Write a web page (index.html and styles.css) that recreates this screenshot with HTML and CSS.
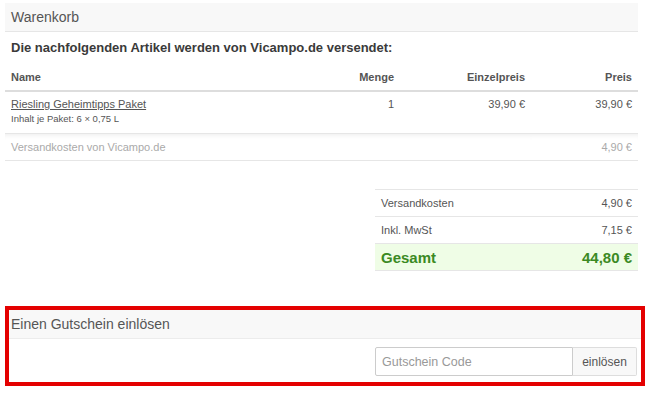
FILE: index.html
```html
<!DOCTYPE html>
<html lang="de">
<head>
    <meta charset="UTF-8">
    <meta name="viewport" content="width=device-width, initial-scale=1.0">
    <title>Warenkorb</title>
    <link rel="stylesheet" href="styles.css">
</head>
<body>
    <div class="page">
        <div class="panel-head">Warenkorb</div>
        <p class="vendor">Die nachfolgenden Artikel werden von Vicampo.de versendet:</p>
        <table class="items">
            <thead>
                <tr>
                    <th class="col-name">Name</th>
                    <th class="col-qty">Menge</th>
                    <th class="col-unit">Einzelpreis</th>
                    <th class="col-price">Preis</th>
                </tr>
            </thead>
            <tbody>
                <tr class="item">
                    <td>
                        <a href="#" class="item-link">Riesling Geheimtipps Paket</a>
                        <div class="item-info">Inhalt je Paket: 6 × 0,75 L</div>
                    </td>
                    <td class="num">1</td>
                    <td class="num">39,90 €</td>
                    <td class="num">39,90 €</td>
                </tr>
                <tr class="shipping">
                    <td colspan="3">Versandkosten von Vicampo.de</td>
                    <td class="num">4,90 €</td>
                </tr>
            </tbody>
        </table>
        <table class="totals">
            <tr>
                <td>Versandkosten</td>
                <td class="num">4,90 €</td>
            </tr>
            <tr>
                <td>Inkl. MwSt</td>
                <td class="num">7,15 €</td>
            </tr>
            <tr class="grand">
                <td>Gesamt</td>
                <td class="num">44,80 €</td>
            </tr>
        </table>
        <div class="coupon">
            <div class="coupon-head">Einen Gutschein einlösen</div>
            <form class="coupon-form">
                <input type="text" class="coupon-input" placeholder="Gutschein Code">
                <button type="submit" class="coupon-btn">einlösen</button>
            </form>
        </div>
    </div>
</body>
</html>
```

FILE: styles.css
```css
html, body {
    margin: 0;
    background: #fff;
    font-family: "Liberation Sans", Arial, sans-serif;
    color: #555;
}
.page {
    width: 633px;
    padding: 3px 0 0 5px;
}
.panel-head {
    height: 28px;
    line-height: 28px;
    padding: 0 6px;
    font-size: 14px;
    color: #555;
    background-color: #f8f8f8;
    border-bottom: 1px solid #e6e6e6;
}
.vendor {
    margin: 7px 0 8px 0;
    padding-left: 6px;
    font-size: 13px;
    line-height: 17px;
    font-weight: bold;
    color: #3a3a3a;
}
.items {
    width: 100%;
    border-collapse: collapse;
}
.items th {
    height: 26px;
    padding: 0 6px;
    font-size: 11px;
    font-weight: bold;
    color: #555;
    text-align: left;
    border-bottom: 2px solid #ddd;
}
.items th.col-qty, .items th.col-unit, .items th.col-price {
    text-align: right;
}
.col-qty {
    width: 68px;
}
.col-unit {
    width: 119px;
}
.col-price {
    width: 95px;
}
.items td {
    padding: 5px 6px 8px;
    vertical-align: top;
    font-size: 11px;
    line-height: 14px;
    color: #555;
    border-bottom: 1px solid #e6e6e6;
}
.num {
    text-align: right;
    white-space: nowrap;
}
.item-link {
    color: #555;
    text-decoration: underline;
}
.item-info {
    margin-top: 2px;
    font-size: 9.5px;
    line-height: 12px;
}
.items .shipping td {
    height: 26px;
    padding: 0 6px;
    vertical-align: middle;
    color: #aaa;
    box-shadow: inset 0 5px 5px -4px rgba(0, 0, 0, 0.08);
}
.totals {
    width: 263px;
    margin: 28px 0 0 auto;
    border-collapse: collapse;
}
.totals td {
    height: 26px;
    padding: 0 6px;
    font-size: 11px;
    color: #555;
    border-top: 1px solid #e6e6e6;
    border-bottom: 1px solid #e6e6e6;
}
.totals .grand td {
    background-color: #effde6;
    color: #3b8a23;
    font-size: 15px;
    font-weight: bold;
}
.coupon {
    margin: 35px -7px 0 0;
    border: 4px solid #e40000;
}
.coupon-head {
    height: 28px;
    line-height: 28px;
    padding: 0 2px;
    font-size: 14px;
    color: #555;
    background-color: #f8f8f8;
    border-bottom: 1px solid #ececec;
}
.coupon-form {
    display: flex;
    justify-content: flex-end;
    margin: 0;
    padding: 8px 4px 6px;
}
.coupon-input {
    box-sizing: border-box;
    width: 198px;
    height: 29px;
    margin: 0;
    padding: 0 6px;
    border: 1px solid #ccc;
    border-radius: 2px 0 0 2px;
    outline: 0;
    font-family: inherit;
    font-size: 12.5px;
    color: #555;
}
.coupon-input::placeholder {
    color: #999;
}
.coupon-btn {
    box-sizing: border-box;
    width: 64px;
    height: 29px;
    margin: 0;
    border: 1px solid #ddd;
    border-left: none;
    border-radius: 0 2px 2px 0;
    background-color: #f8f8f8;
    font-family: inherit;
    font-size: 12px;
    color: #555;
    cursor: pointer;
}
```
